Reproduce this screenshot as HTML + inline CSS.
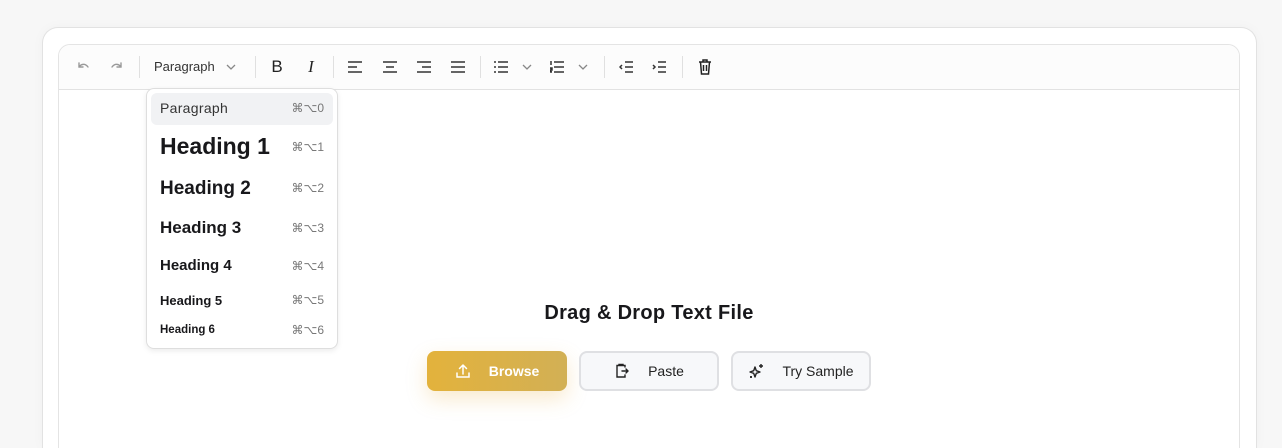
<!DOCTYPE html>
<html style="width:1282px;height:448px;overflow:hidden"><head><style>
*{margin:0;padding:0;box-sizing:border-box}
body{width:1282px;height:448px;background:#f7f7f7;font-family:"Liberation Sans",sans-serif;position:relative;overflow:hidden;color:#1a1a1a}
.card{position:absolute;left:42px;top:27px;width:1215px;height:421px;background:#fff;border:1px solid #e2e2e2;border-bottom:none;border-radius:16px 16px 0 0;box-shadow:0 0 12px rgba(0,0,0,.03)}
.ed{position:absolute;left:58px;top:44px;width:1182px;height:404px;background:#fff;border:1px solid #e4e4e4;border-bottom:none;border-radius:12px 12px 0 0;overflow:hidden}
.tb{position:absolute;left:0;top:0;right:0;height:45px;background:#fcfcfc;border-bottom:1px solid #e2e2e2}
.i{position:absolute;top:67px;transform:translate(-50%,-50%)}
.sep{position:absolute;top:56px;width:1px;height:22px;background:#e0e0e0}
.dd{position:absolute;left:146px;top:88px;width:192px;height:261px;background:#fff;border:1px solid #dedede;border-radius:8px;box-shadow:0 2px 6px rgba(0,0,0,.08)}
.it{position:absolute;left:13px;font-weight:bold;color:#18181b}
.k{position:absolute;right:13px;font-size:12px;color:#777}
.btn{position:absolute;top:351px;width:140px;height:40px;border-radius:8px;font-size:14px;display:flex;align-items:center;justify-content:center;gap:18px}
</style></head><body>
<div class="card"></div>
<div class="ed"><div class="tb"></div></div>
<svg class="i" style="left:83px" width="16" height="16" viewBox="0 0 16 16" fill="none" stroke="#999" stroke-width="1.4" stroke-linecap="round"><path d="M4 4v4h4M4 8c2-3 6-4 9 0"/></svg>
<svg class="i" style="left:117px" width="16" height="16" viewBox="0 0 16 16" fill="none" stroke="#999" stroke-width="1.4" stroke-linecap="round"><path d="M12 4v4H8M12 8c-2-3-6-4-9 0"/></svg>
<div class="sep" style="left:139px"></div>
<div style="position:absolute;left:154px;top:59px;font-size:13px;color:#333">Paragraph</div>
<svg class="i" style="left:231px" width="12" height="12" viewBox="0 0 12 12" fill="none" stroke="#888" stroke-width="1.3"><path d="M2 4l4 4 4-4"/></svg>
<div class="sep" style="left:255px"></div>
<div class="i" style="left:277px;font-size:17px;color:#222">B</div>
<div class="i" style="left:311px;font-size:17px;color:#222;font-family:'Liberation Serif',serif;font-style:italic">I</div>
<div class="sep" style="left:333px"></div>
<svg class="i" style="left:355px" width="14" height="12" viewBox="0 0 14 12" stroke="#333" stroke-width="1.5"><path d="M0 1h14M0 6h9M0 11h14"/></svg>
<svg class="i" style="left:390px" width="14" height="12" viewBox="0 0 14 12" stroke="#333" stroke-width="1.5"><path d="M0 1h14M3 6h8M0 11h14"/></svg>
<svg class="i" style="left:424px" width="14" height="12" viewBox="0 0 14 12" stroke="#333" stroke-width="1.5"><path d="M0 1h14M5 6h9M0 11h14"/></svg>
<svg class="i" style="left:458px" width="14" height="12" viewBox="0 0 14 12" stroke="#333" stroke-width="1.5"><path d="M0 1h14M0 6h14M0 11h14"/></svg>
<div class="sep" style="left:480px"></div>
<svg class="i" style="left:501px" width="14" height="12" viewBox="0 0 14 12" stroke="#333" stroke-width="1.5"><path d="M0 1h2M4 1h10M0 6h2M4 6h10M0 11h2M4 11h10"/></svg>
<svg class="i" style="left:527px" width="12" height="12" viewBox="0 0 12 12" fill="none" stroke="#888" stroke-width="1.3"><path d="M2 4l4 4 4-4"/></svg>
<svg class="i" style="left:557px" width="14" height="12" viewBox="0 0 14 12" stroke="#333" stroke-width="1.5"><path d="M1 0v4M0 7h2v2H0v2h2M4 1h10M4 6h10M4 11h10"/></svg>
<svg class="i" style="left:583px" width="12" height="12" viewBox="0 0 12 12" fill="none" stroke="#888" stroke-width="1.3"><path d="M2 4l4 4 4-4"/></svg>
<div class="sep" style="left:604px"></div>
<svg class="i" style="left:626px" width="14" height="12" viewBox="0 0 14 12" fill="none" stroke="#333" stroke-width="1.5"><path d="M3 4L1 6l2 2M6 1h8M6 6h8M6 11h8"/></svg>
<svg class="i" style="left:659px" width="14" height="12" viewBox="0 0 14 12" fill="none" stroke="#333" stroke-width="1.5"><path d="M1 4l2 2-2 2M6 1h8M6 6h8M6 11h8"/></svg>
<div class="sep" style="left:682px"></div>
<svg class="i" style="left:705px" width="14" height="16" viewBox="0 0 14 16" fill="none" stroke="#222" stroke-width="1.5"><path d="M1 3h12M5 3V1h4v2M2.5 3l1 12h7l1-12M5.5 6v6M8.5 6v6"/></svg>

<div class="dd">
 <div style="position:absolute;left:4px;top:4px;width:182px;height:32px;background:#f1f2f4;border-radius:6px"></div>
 <div class="it" style="top:11px;font-size:14px;font-weight:normal;color:#333;letter-spacing:.3px">Paragraph</div><div class="k" style="top:12px">⌘⌥0</div>
 <div class="it" style="top:44px;font-size:23px">Heading 1</div><div class="k" style="top:51px">⌘⌥1</div>
 <div class="it" style="top:89px;font-size:19px">Heading 2</div><div class="k" style="top:92px">⌘⌥2</div>
 <div class="it" style="top:129px;font-size:17px">Heading 3</div><div class="k" style="top:132px">⌘⌥3</div>
 <div class="it" style="top:168px;font-size:15px">Heading 4</div><div class="k" style="top:170px">⌘⌥4</div>
 <div class="it" style="top:204px;font-size:13px">Heading 5</div><div class="k" style="top:204px">⌘⌥5</div>
 <div class="it" style="top:235px;font-size:11.5px">Heading 6</div><div class="k" style="top:234px">⌘⌥6</div>
</div>

<div style="position:absolute;left:0;width:1298px;top:302px;text-align:center;font-size:20px;font-weight:bold;color:#18181b;letter-spacing:.3px">Drag &amp; Drop Text File</div>
<div class="btn" style="left:427px;background:linear-gradient(90deg,#e3b23c,#d2b055);color:#fff;font-weight:bold;box-shadow:0 8px 20px rgba(230,170,60,.25)">
<svg width="16" height="16" viewBox="0 0 16 16" fill="none" stroke="#fff" stroke-width="1.5" stroke-linecap="round"><path d="M8 11V2M4.5 5.5L8 2l3.5 3.5M2 10v4h12v-4"/></svg><span>Browse</span></div>
<div class="btn" style="left:579px;background:#f7f8fa;border:2px solid #dfe0e3;color:#222">
<svg width="16" height="16" viewBox="0 0 16 16" fill="none" stroke="#222" stroke-width="1.4" stroke-linecap="round"><path d="M11 4V2.5H3V14h8v-2M5 2.5V1.5h4v1M8 8h6M12 6l2 2-2 2"/></svg><span>Paste</span></div>
<div class="btn" style="left:731px;background:#f7f8fa;border:2px solid #dfe0e3;color:#222">
<svg width="16" height="16" viewBox="0 0 16 16" fill="none" stroke="#222" stroke-width="1.4" stroke-linejoin="round"><path d="M7 4l1.3 3.7L12 9l-3.7 1.3L7 14l-1.3-3.7L2 9l3.7-1.3z"/><path d="M13 1v4M11 3h4M3 13v2M2 14h2"/></svg><span>Try Sample</span></div>
</body></html>
